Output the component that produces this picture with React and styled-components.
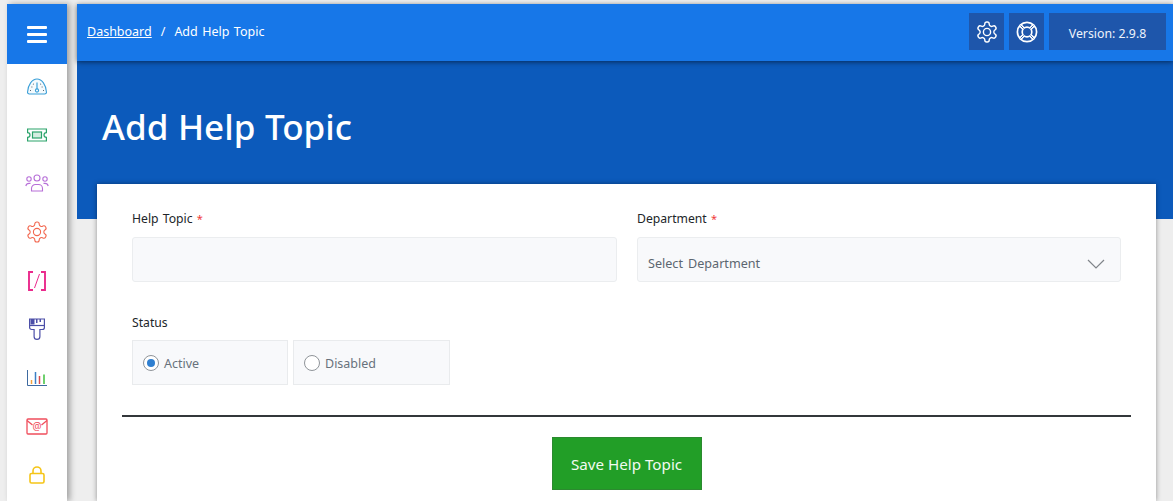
import React from "react";
import styled, { createGlobalStyle } from "styled-components";

const Global = createGlobalStyle`
  html, body { margin: 0; padding: 0; height: 100%; overflow: hidden; background: #eeeeee; }
  body { font-family: "Noto Sans", "Open Sans", sans-serif; }
  #root { height: 501px; }
  * { box-sizing: border-box; }
`;

const Page = styled.div`
  display: flex;
  height: 501px;
  padding: 4px 0 0 7px;
  gap: 10px;
  overflow: hidden;
`;
const Sidebar = styled.nav`
  width: 60px;
  flex: none;
  background: #fff;
  box-shadow: 3px 0 6px rgba(0, 0, 0, 0.32);
  display: flex;
  flex-direction: column;
  overflow: visible;
`;
const Burger = styled.div`
  height: 60px;
  flex: none;
  background: #1777e8;
  display: flex;
  align-items: center;
  justify-content: center;
`;
const NavList = styled.div`
  display: flex;
  flex-direction: column;
`;
const NavItem = styled.div`
  height: 48.6px;
  flex: none;
  padding-bottom: 4px;
  display: flex;
  align-items: center;
  justify-content: center;
`;
const Main = styled.div`
  flex: 1;
  min-width: 0;
  display: flex;
  flex-direction: column;
`;
const Header = styled.header`
  height: 57px;
  flex: none;
  background: #1777e8;
  box-shadow: 0 1px 5px rgba(0, 0, 0, 0.55);
  position: relative;
  z-index: 2;
  display: flex;
  align-items: center;
  justify-content: space-between;
  padding: 0 7px 2px 10px;
`;
const Crumbs = styled.div`
  display: flex;
  align-items: center;
  color: #fff;
  font-size: 12.5px;
  word-spacing: 1.2px;
`;
const CrumbLink = styled.a`
  color: #fff;
  text-decoration: underline;
`;
const CrumbSep = styled.span`
  margin: 0 9px;
`;
const Tools = styled.div`
  display: flex;
  gap: 5px;
`;
const ToolBtn = styled.div`
  width: 35px;
  height: 37px;
  background: #1e56ab;
  display: flex;
  align-items: center;
  justify-content: center;
`;
const Version = styled.div`
  width: 117px;
  height: 37px;
  padding-top: 3px;
  background: #1e56ab;
  color: #eef3fb;
  font-size: 12.3px;
  display: flex;
  align-items: center;
  justify-content: center;
`;
const Hero = styled.section`
  height: 158px;
  flex: none;
  background: #0c5abb;
  padding: 41px 0 0 25px;
`;
const Title = styled.h1`
  margin: 0;
  color: #fff;
  font-size: 35px;
  font-weight: 500;
  line-height: 50px;
  word-spacing: 0.5px;
  font-family: "Noto Sans", sans-serif;
`;
const Card = styled.section`
  width: 1059px;
  margin: -35px 0 0 20px;
  flex: 1;
  background: #fff;
  box-shadow: 0 0 5px rgba(0, 0, 0, 0.4);
  padding: 26px 35px 0;
  position: relative;
`;
const Row = styled.div`
  display: grid;
  grid-template-columns: 485px 484px;
  gap: 20px;
`;
const Field = styled.div`
  display: flex;
  flex-direction: column;
`;
const Label = styled.label`
  font-size: 12.2px;
  line-height: 18px;
  color: #212529;
  margin-bottom: 9px;
  word-spacing: 1px;
`;
const Req = styled.span`
  color: #f03a3a;
  font-size: 11px;
`;
const Input = styled.div`
  height: 45px;
  background: #f8f9fb;
  border: 1px solid #ebedef;
  border-radius: 3px;
`;
const Select = styled(Input)`
  display: flex;
  align-items: center;
  justify-content: space-between;
  padding: 8px 15px 0 10px;
  font-size: 12.6px;
  word-spacing: 1.8px;
  color: #5c6670;
`;
const StatusBlock = styled.div`
  margin-top: 32px;
  display: flex;
  flex-direction: column;
`;
const StatusLabel = styled(Label)`
  margin-bottom: 8px;
`;
const Radios = styled.div`
  display: flex;
  gap: 5px;
`;
const RadioBox = styled.div`
  width: ${(p) => p.$w}px;
  height: 45px;
  background: #f8f9fb;
  border: 1px solid #e9ebed;
  display: flex;
  align-items: center;
  padding-left: 10px;
  gap: 5px;
  font-size: 12.5px;
  color: #68727c;
`;
const RadioText = styled.span`
  padding-top: 2px;
`;
const RadioDot = styled.span`
  width: 16px;
  height: 16px;
  border-radius: 50%;
  border: 1px solid #8f9499;
  background: #fff;
  display: flex;
  align-items: center;
  justify-content: center;
  &::after {
    content: "";
    display: ${(p) => (p.$on ? "block" : "none")};
    width: 8px;
    height: 8px;
    border-radius: 50%;
    background: #2f7fd0;
  }
`;
const Divider = styled.hr`
  margin: 30px -10px 0;
  border: 0;
  border-top: 2px solid #33373a;
`;
const Actions = styled.div`
  display: flex;
  justify-content: center;
  margin-top: 20px;
`;
const SaveBtn = styled.button`
  width: 150px;
  height: 53px;
  background: #229e27;
  border: 1px solid #2b8a2f;
  color: #f2fbf2;
  font-size: 15.2px;
  font-family: "Noto Sans", sans-serif;
`;

const Gear = ({ color, size = 24, sw = 1.5 }) => (
  <svg width={size} height={size} viewBox="0 0 24 24" fill="none" stroke={color} strokeWidth={sw} strokeLinecap="round" strokeLinejoin="round">
    <path d="M12.22 2h-.44a2 2 0 0 0-2 2v.18a2 2 0 0 1-1 1.73l-.43.25a2 2 0 0 1-2 0l-.15-.08a2 2 0 0 0-2.73.73l-.22.38a2 2 0 0 0 .73 2.73l.15.1a2 2 0 0 1 1 1.72v.51a2 2 0 0 1-1 1.74l-.15.09a2 2 0 0 0-.73 2.73l.22.38a2 2 0 0 0 2.73.73l.15-.08a2 2 0 0 1 2 0l.43.25a2 2 0 0 1 1 1.73V20a2 2 0 0 0 2 2h.44a2 2 0 0 0 2-2v-.18a2 2 0 0 1 1-1.73l.43-.25a2 2 0 0 1 2 0l.15.08a2 2 0 0 0 2.73-.73l.22-.39a2 2 0 0 0-.73-2.73l-.15-.08a2 2 0 0 1-1-1.74v-.5a2 2 0 0 1 1-1.74l.15-.09a2 2 0 0 0 .73-2.73l-.22-.38a2 2 0 0 0-2.73-.73l-.15.08a2 2 0 0 1-2 0l-.43-.25a2 2 0 0 1-1-1.73V4a2 2 0 0 0-2-2z" />
    <circle cx="12" cy="12" r="3.6" />
  </svg>
);

const Lifebuoy = () => (
  <svg width="22" height="22" viewBox="0 0 22 22" fill="none" stroke="#fff" strokeWidth="1.7">
    <circle cx="11" cy="11" r="9.6" />
    <circle cx="11" cy="11" r="4.8" />
    <path d="M4.2 4.2l3.4 3.4M17.8 4.2l-3.4 3.4M4.2 17.8l3.4-3.4M17.8 17.8l-3.4-3.4" strokeWidth="3.4" />
    <path d="M4.6 4.6l3 3M17.4 4.6l-3 3M4.6 17.4l3-3M17.4 17.4l-3-3" stroke="#1e56ab" strokeWidth="0.9" />
  </svg>
);

const DashIcon = () => (
  <svg width="20" height="17" viewBox="0 0 20 17" fill="none" stroke="#3a9fd8" strokeWidth="1.1">
    <path d="M2.5 16h15a1.8 1.8 0 0 0 1.9-2.2C19 7 15 1 10 1S1 7 .6 13.8A1.8 1.8 0 0 0 2.5 16z" fill="#f4fafd" />
    <path d="M10 4.5V11" strokeWidth="1.2" />
    <circle cx="10" cy="12.5" r="1.6" />
    <path d="M4.5 9h.8M14.7 9h.8M6.1 5.8l.5.5M13.9 5.8l-.5.5M3 12.5h.8M16.2 12.5h.8" stroke="#33424d" />
  </svg>
);
const TicketIcon = () => (
  <svg width="20" height="14" viewBox="0 0 20 14" fill="none" stroke="#2ba36b" strokeWidth="1.2">
    <path d="M.6 1h18.8v3.6a2.4 2.4 0 0 0 0 4.8V13H.6V9.4a2.4 2.4 0 0 0 0-4.8z" />
    <rect x="5.5" y="4" width="9" height="6" fill="#d5eee1" />
  </svg>
);
const UsersIcon = () => (
  <svg width="24" height="18" viewBox="0 0 24 18" fill="none" stroke="#b76fd8" strokeWidth="1.1">
    <circle cx="12" cy="4" r="3" />
    <circle cx="4" cy="5" r="2.2" />
    <circle cx="20" cy="5" r="2.2" />
    <path d="M6.5 17v-2.5a4 4 0 0 1 4-4h3a4 4 0 0 1 4 4V17z" />
    <path d="M.8 12a3.4 3.4 0 0 1 3.2-2.6h1.5M23.2 12A3.4 3.4 0 0 0 20 9.4h-1.5" />
  </svg>
);
const CodeIcon = () => (
  <svg width="18" height="20" viewBox="0 0 18 20" fill="none" stroke="#ea2a8c" strokeWidth="1.9">
    <path d="M5 1H1v18h4M13 1h4v18h-4" />
    <path d="M11.5 3L6.5 17" strokeWidth="1" />
  </svg>
);
const BrushIcon = () => (
  <svg width="16" height="22" viewBox="0 0 16 22" fill="none" stroke="#4c4fa8" strokeWidth="1.2">
    <path d="M.6 1h14.8v8.5a2 2 0 0 1-2 2h-2.5v7a2.9 2.9 0 0 1-5.8 0v-7H2.6a2 2 0 0 1-2-2z" />
    <path d="M.6 7.5h14.8" />
    <path d="M1.5 1h4v5.5h-4zM7 1h1.5v4H7zM10.5 1H12v3h-1.5z" fill="#4c4fa8" stroke="none" />
  </svg>
);
const ChartIcon = () => (
  <svg width="20" height="16" viewBox="0 0 20 16" fill="none" strokeWidth="1.5">
    <path d="M.5 0v15.5H20" stroke="#3e6aa0" strokeWidth="1" />
    <path d="M4.5 14v-4" stroke="#f3a23c" />
    <path d="M8.5 14V2" stroke="#3b7fc4" />
    <path d="M12.5 14V6" stroke="#d84c4c" />
    <path d="M17 14V4.5" stroke="#6ed06e" strokeWidth="2" />
  </svg>
);
const MailIcon = () => (
  <svg width="22" height="17" viewBox="0 0 22 17" fill="none" stroke="#f04e5c" strokeWidth="1.3">
    <rect x="1" y="1" width="20" height="15" rx="1" />
    <path d="M1 2.5l5.5 4.5M21 2.5L15.5 7" />
    <text x="11" y="12" textAnchor="middle" fontSize="10" fill="#f04e5c" stroke="none" fontFamily="Noto Sans, sans-serif">@</text>
  </svg>
);
const LockIcon = () => (
  <svg width="16" height="18" viewBox="0 0 16 18" fill="none" stroke="#f5c518" strokeWidth="1.6">
    <rect x="1" y="7.5" width="14" height="9.5" rx="1.5" />
    <path d="M4 7.5V5a4 4 0 0 1 8 0v2.5" />
  </svg>
);

const navIcons = [
  <DashIcon />,
  <TicketIcon />,
  <UsersIcon />,
  <Gear color="#f2674f" size={24} sw={1.1} />,
  <CodeIcon />,
  <BrushIcon />,
  <ChartIcon />,
  <MailIcon />,
  <LockIcon />,
];

export default function App() {
  return (
    <Page>
      <Global />
      <Sidebar>
        <Burger>
          <svg width="20" height="17" viewBox="0 0 20 17" fill="#fff">
            <rect y="0" width="20" height="3" rx="1" />
            <rect y="7" width="20" height="3" rx="1" />
            <rect y="14" width="20" height="3" rx="1" />
          </svg>
        </Burger>
        <NavList>
          {navIcons.map((icon, i) => (
            <NavItem key={i}>{icon}</NavItem>
          ))}
        </NavList>
      </Sidebar>
      <Main>
        <Header>
          <Crumbs>
            <CrumbLink>Dashboard</CrumbLink>
            <CrumbSep>/</CrumbSep>
            <span>Add Help Topic</span>
          </Crumbs>
          <Tools>
            <ToolBtn><Gear color="#fff" size={24} sw={1.4} /></ToolBtn>
            <ToolBtn><Lifebuoy /></ToolBtn>
            <Version>Version: 2.9.8</Version>
          </Tools>
        </Header>
        <Hero>
          <Title>Add Help Topic</Title>
        </Hero>
        <Card>
          <Row>
            <Field>
              <Label>Help Topic <Req>*</Req></Label>
              <Input />
            </Field>
            <Field>
              <Label>Department <Req>*</Req></Label>
              <Select>
                <span>Select Department</span>
                <svg width="18" height="10" viewBox="0 0 18 10" fill="none" stroke="#80858a" strokeWidth="1.2">
                  <path d="M1 1l8 8 8-8" />
                </svg>
              </Select>
            </Field>
          </Row>
          <StatusBlock>
            <StatusLabel>Status</StatusLabel>
            <Radios>
              <RadioBox $w={156}><RadioDot $on /><RadioText>Active</RadioText></RadioBox>
              <RadioBox $w={157}><RadioDot /><RadioText>Disabled</RadioText></RadioBox>
            </Radios>
          </StatusBlock>
          <Divider />
          <Actions>
            <SaveBtn>Save Help Topic</SaveBtn>
          </Actions>
        </Card>
      </Main>
    </Page>
  );
}
